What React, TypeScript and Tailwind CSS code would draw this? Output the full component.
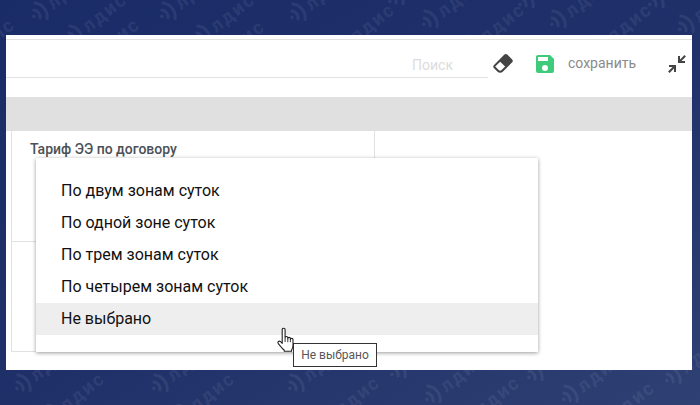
const marks = [
  [37, 14], [165, 14], [295, 15], [393, -1], [523, 2], [653, 2], [427, 22], [555, 22], [683, 27],
  [72, 37], [200, 37], [340, 47], [470, 47], [597, 47], [-40, 62], [85, 62], [210, 64],
  [20, 386], [157, 386], [293, 386], [430, 397], [567, 397], [395, 372], [532, 375], [670, 378],
  [50, 416], [180, 416], [325, 420], [465, 420], [600, 425],
]

function Watermark() {
  return (
    <svg className="absolute inset-0 h-full w-full" viewBox="0 0 700 405" aria-hidden>
      {marks.map(([x, y]) => (
        <g key={`${x}-${y}`} transform={`translate(${x} ${y}) rotate(-38)`} fill="none" stroke="#fff" strokeOpacity="0.07">
          <circle cx="-4" cy="0" r="1.8" fill="#fff" fillOpacity="0.07" stroke="none" />
          <path d="M0 -5a7 7 0 0 1 0 10" strokeWidth="3" strokeLinecap="round" />
          <path d="M5 -10a14 14 0 0 1 0 20" strokeWidth="3" strokeLinecap="round" />
          <text
            x="15"
            y="7"
            fontFamily="Roboto, sans-serif"
            fontSize="19"
            fontWeight="700"
            letterSpacing="2"
            fill="#fff"
            fillOpacity="0.08"
            stroke="none"
          >
            лдис
          </text>
        </g>
      ))}
    </svg>
  )
}

function HandCursor() {
  return (
    <svg className="absolute left-[276px] top-[327px] h-[26px] w-[21px]" viewBox="0 0 21 26" aria-hidden>
      <path
        d="M6.2 2.6c0-1.9 2.9-1.9 2.9 0v8.2c0-1.7 2.7-1.7 2.7 0v.8c0-1.6 2.6-1.6 2.6 0v.9c0-1.5 2.6-1.5 2.6.1v5.6c0 1.9-.5 3.4-1.4 4.6v1.4H8.2v-1.2c-1.6-1-3.7-3.6-5.9-6.4-1.3-1.7.8-3.3 2.3-1.9l1.6 1.6z"
        fill="#fff"
        stroke="#222"
        strokeWidth="1.1"
        strokeLinejoin="round"
      />
      <path d="M9.1 11v4M11.8 11.6v3.6M14.4 12.4v2.8" stroke="#222" strokeWidth="0.9" fill="none" />
    </svg>
  )
}

const options = ["По двум зонам суток", "По одной зоне суток", "По трем зонам суток", "По четырем зонам суток", "Не выбрано"]

export default function App() {
  return (
    <div className="relative h-[405px] w-[700px] overflow-hidden bg-gradient-to-br from-[#1a2c68] via-[#1f3069] to-[#2f4073] pl-[6px] pt-[35px] font-['Roboto',sans-serif]">
      <Watermark />
      <div className="relative h-[335px] w-[686px] bg-white">
        <div className="h-[4px]" />
        <div className="flex h-[39px] border-t border-[#e2e2e2]">
          <div className="flex w-[482px] justify-end border-b border-[#e2e2e2] pr-[35px]">
            <span className="pt-[15px] text-[14px] leading-5 text-[#dcdcdc]">Поиск</span>
          </div>
          <svg className="ml-[3px] mt-[11px] h-6 w-6 text-[#444]" viewBox="0 0 24 24" fill="currentColor" aria-hidden>
            <path d="M16.24,3.56L21.19,8.5C21.97,9.29 21.97,10.55 21.19,11.34L12,20.53C10.44,22.09 7.91,22.09 6.34,20.53L2.81,17C2.03,16.21 2.03,14.95 2.81,14.16L13.41,3.56C14.2,2.78 15.46,2.78 16.24,3.56M4.22,15.58L7.76,19.11C8.54,19.9 9.8,19.9 10.59,19.11L14.12,15.58L9.17,10.63L4.22,15.58Z" />
          </svg>
          <svg className="ml-[18px] mt-[12px] h-6 w-6 text-[#3fcb7b]" viewBox="0 0 24 24" fill="currentColor" aria-hidden>
            <path d="M15,9H5V5H15M12,19A3,3 0 0,1 9,16A3,3 0 0,1 12,13A3,3 0 0,1 15,16A3,3 0 0,1 12,19M17,3H5C3.89,3 3,3.9 3,5V19A2,2 0 0,0 5,21H19A2,2 0 0,0 21,19V7L17,3Z" />
          </svg>
          <span className="ml-[11px] pt-[13px] text-[14px] leading-5 text-[#8a8a8a]">сохранить</span>
          <svg className="ml-[29px] mt-[12px] h-6 w-6 text-[#444]" viewBox="0 0 24 24" fill="currentColor" aria-hidden>
            <path d="M19.5,3.09L15,7.59V4H13V11H20V9H16.41L20.91,4.5L19.5,3.09M4,13V15H7.59L3.09,19.5L4.5,20.91L9,16.41V20H11V13H4Z" />
          </svg>
        </div>
        <div className="h-[19px]" />
        <div className="h-[34px] bg-[#e0e0e0]" />
        <div className="ml-[5px] h-[221px] w-[364px]">
          <div className="h-[111px] border-b border-l border-r border-[#e2e2e2] pl-[18px] pt-[10px] text-[14px] font-medium leading-4 text-[#4b5056]">
            Тариф ЭЭ по договору
          </div>
          <div className="h-[110px] w-[30px] border-b border-l border-[#e2e2e2]" />
        </div>
      </div>

      <div className="absolute left-[36px] top-[158px] h-[194px] w-[502px] bg-white pt-[17px] shadow-[0_1px_4px_rgba(0,0,0,0.4)]">
        {options.map((label) => (
          <div
            key={label}
            className={`h-8 pl-[25px] text-[16px] leading-8 text-[#111111] ${label === "Не выбрано" ? "bg-[#eeeeee]" : ""}`}
          >
            {label}
          </div>
        ))}
      </div>

      <div className="absolute left-[293px] top-[343px] flex h-[24px] w-[84px] items-center justify-center border border-[#333] bg-white text-[12px] text-[#575757]">
        Не выбрано
      </div>
      <HandCursor />
    </div>
  )
}
